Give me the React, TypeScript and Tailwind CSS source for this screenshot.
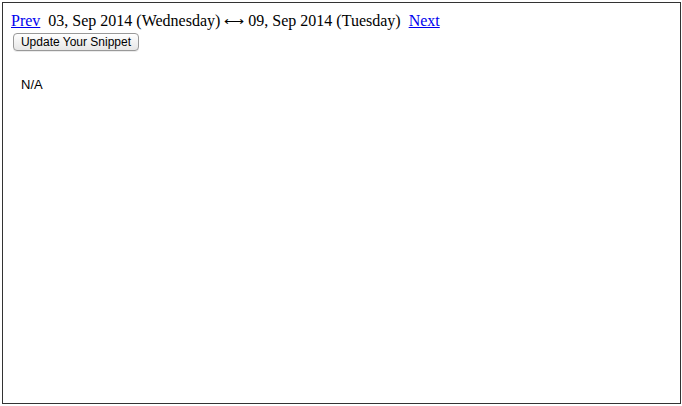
export default function App() {
  return (
    <div className="m-[2px] h-[402px] w-[679px] border border-[#333] bg-white px-[8px] pt-[8px]">
      {/* Date range nav */}
      <div className="font-['Liberation_Serif',serif] text-[16px] leading-[20px] text-black">
        <a href="#" className="text-[#0000ee] underline">Prev</a>
        <span>&nbsp; 03, Sep 2014 (Wednesday) </span>
        <span className="text-[14px] leading-none">⟷</span>
        <span> 09, Sep 2014 (Tuesday) &nbsp;</span>
        <a href="#" className="text-[#0000ee] underline">Next</a>
      </div>

      <button className="ml-[2px] mt-[2px] flex h-[18px] w-[126px] items-center justify-center rounded-[4px] border border-[#999] bg-gradient-to-b from-white to-[#e6e6e6] font-['Liberation_Sans',sans-serif] text-[12px] leading-none text-black shadow-[0_1px_0_rgba(0,0,0,0.08)]">
        Update Your Snippet
      </button>

      {/* Snippet body */}
      <div className="ml-[10px] mt-[26px] font-['Liberation_Sans',sans-serif] text-[13px] leading-[16px] text-black">
        N/A
      </div>
    </div>
  );
}
